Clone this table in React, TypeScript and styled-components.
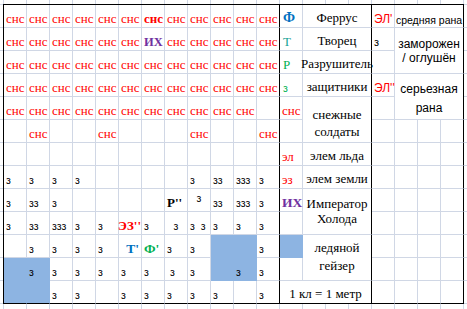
import type { ReactNode } from 'react';
import styled, { createGlobalStyle } from 'styled-components';

const GRID = '#d0d7e5';
const EDGE = '#000000';
const FILL = '#8db4e2';
const RED = '#ff0000';
const BLUE = '#0070c0';
const GREEN = '#00b050';
const TEAL = '#16a398';
const PURPLE = '#7030a0';

const ROWS = 13;
const COLS = 20;
const SECTION_ENDS = [11, 15, 19];

type Align = 'flex-start' | 'center' | 'flex-end';

type Spec = {
  r: number;
  c: number;
  rs?: number;
  cs?: number;
  node?: ReactNode;
  fill?: boolean;
  h?: Align;
  v?: Align;
  px?: number;
  pb?: number;
};

const GlobalStyle = createGlobalStyle`
  html, body {
    margin: 0;
    padding: 0;
    background: #ffffff;
  }
  body {
    overflow: hidden;
  }
`;

const Sheet = styled.div`
  width: 467px;
  height: 309px;
  box-sizing: border-box;
  padding: 4px 0 0 3px;
  overflow: hidden;
  background-color: #ffffff;
  background-image: linear-gradient(to right, ${GRID} 1px, transparent 1px),
    linear-gradient(to bottom, ${GRID} 1px, transparent 1px);
  background-size: 23px 23px;
  background-position: 3px 4px;
`;

const Table = styled.div`
  display: grid;
  grid-template-columns: repeat(${COLS}, 23px);
  grid-template-rows: repeat(${ROWS}, 23px);
  width: max-content;
  border-left: 1px solid ${EDGE};
  border-top: 1px solid ${EDGE};
  background: #ffffff;
`;

const Cell = styled.div<{
  $r: number;
  $c: number;
  $rs: number;
  $cs: number;
  $right: string;
  $bottom: string;
  $fill: boolean;
  $h: Align;
  $v: Align;
  $px: number;
  $pb: number;
}>`
  grid-row: ${(p) => p.$r + 1} / span ${(p) => p.$rs};
  grid-column: ${(p) => p.$c + 1} / span ${(p) => p.$cs};
  display: flex;
  box-sizing: border-box;
  min-width: 0;
  border-right: 1px solid ${(p) => p.$right};
  border-bottom: 1px solid ${(p) => p.$bottom};
  background: ${(p) => (p.$fill ? FILL : 'transparent')};
  justify-content: ${(p) => p.$h};
  align-items: ${(p) => p.$v};
  padding: 0 ${(p) => p.$px}px ${(p) => p.$pb}px;
  white-space: pre;
`;

const Snow = styled.span<{ $bold?: boolean }>`
  font-family: 'Liberation Serif', 'Times New Roman', serif;
  font-size: 13px;
  line-height: 1;
  color: ${RED};
  font-weight: ${(p) => (p.$bold ? 700 : 400)};
`;

const Ice = styled.span<{ $color?: string }>`
  font-family: 'Liberation Sans', Arial, sans-serif;
  font-size: 10.5px;
  line-height: 1;
  margin-bottom: 1px;
  color: ${(p) => p.$color ?? '#000000'};
`;

const Mark = styled.span<{ $color: string; $size?: number; $bold?: boolean }>`
  font-family: 'Liberation Serif', 'Times New Roman', serif;
  font-size: ${(p) => p.$size ?? 13}px;
  font-weight: ${(p) => (p.$bold === false ? 400 : 700)};
  line-height: 1;
  color: ${(p) => p.$color};
`;

const Name = styled.span<{ $lh?: number }>`
  font-family: 'Liberation Serif', 'Times New Roman', serif;
  font-size: 13px;
  line-height: ${(p) => (p.$lh ? `${p.$lh}px` : '1')};
  color: #000000;
  text-align: center;
  margin-bottom: 1px;
`;

const Note = styled.span<{ $color?: string; $size?: number; $lh?: number }>`
  font-family: 'Liberation Sans', Arial, sans-serif;
  font-size: ${(p) => p.$size ?? 12}px;
  line-height: ${(p) => (p.$lh ? `${p.$lh}px` : '1')};
  color: ${(p) => p.$color ?? '#000000'};
  text-align: center;
`;

const specs: Spec[] = [];

const snowRows: number[][] = [
  [0, 1, 2, 3, 4, 5, 6, 7, 8, 9, 10, 11],
  [0, 1, 2, 3, 4, 5, 7, 8, 9, 10, 11],
  [0, 1, 2, 3, 4, 5, 6, 7, 8, 9, 10, 11],
  [0, 1, 2, 3, 4, 5, 6, 7, 8, 9, 10, 11],
  [0, 1, 2, 3, 4, 5, 6, 7, 8, 9, 10, 12],
  [1, 4, 8, 11],
];

snowRows.forEach((cols, r) =>
  cols.forEach((c) => specs.push({ r, c, node: <Snow $bold={r === 0 && c === 6}>снс</Snow> })),
);

const iceCells: [number, number, string][] = [
  [7, 0, 'з'], [7, 1, 'з'], [7, 2, 'з'], [7, 3, 'з'], [7, 8, 'з'], [7, 9, 'зз'], [7, 10, 'ззз'], [7, 11, 'з'],
  [8, 0, 'з'], [8, 1, 'зз'], [8, 2, 'з'], [8, 9, 'зз'], [8, 10, 'ззз'], [8, 11, 'з'],
  [9, 0, 'з'], [9, 1, 'зз'], [9, 2, 'ззз'], [9, 3, 'з'], [9, 4, 'з'], [9, 6, 'з'], [9, 8, 'з  з'],
  [9, 9, 'з'], [9, 10, 'з'], [9, 11, 'з'],
  [10, 1, 'з'], [10, 2, 'з'], [10, 3, 'з'], [10, 4, 'з'], [10, 7, 'з'], [10, 8, 'з'], [10, 11, 'з'],
  [11, 2, 'з'], [11, 3, 'з'], [11, 4, 'з'], [11, 5, 'з'], [11, 6, 'з'], [11, 7, ' з'], [11, 8, 'з'], [11, 11, 'з'],
  [12, 2, 'з'], [12, 3, 'з'], [12, 5, 'з'], [12, 6, 'з'], [12, 7, 'з'], [12, 8, 'з'], [12, 9, 'з'], [12, 11, 'з'],
];

iceCells.forEach(([r, c, t]) => specs.push({ r, c, node: <Ice>{t}</Ice> }));

specs.push(
  { r: 8, c: 8, node: <Ice>з</Ice>, h: 'center', pb: 7 },
  { r: 9, c: 7, node: <Ice>з</Ice>, h: 'center' },
  { r: 10, c: 9, fill: true },
  { r: 10, c: 10, fill: true },
  { r: 11, c: 9, fill: true },
  { r: 11, c: 10, fill: true, node: <Ice>з</Ice> },
  { r: 11, c: 0, fill: true },
  { r: 11, c: 1, fill: true, node: <Ice>з</Ice> },
  { r: 12, c: 0, fill: true },
  { r: 12, c: 1, fill: true },
  { r: 10, c: 12, fill: true },

  { r: 1, c: 6, node: <Mark $color={PURPLE} $size={12.5}>ИХ</Mark> },
  { r: 8, c: 7, node: <Mark $color="#000000">Р''</Mark> },
  { r: 9, c: 5, node: <Mark $color={RED}>ЭЗ''</Mark>, h: 'flex-end', px: 0 },
  { r: 10, c: 5, node: <Mark $color={BLUE} $size={13.5}>Т'</Mark>, h: 'flex-end' },
  { r: 10, c: 6, node: <Mark $color={GREEN} $size={13.5}>Ф'</Mark> },

  { r: 0, c: 12, node: <Mark $color={BLUE} $size={14}>Ф</Mark>, px: 3 },
  { r: 1, c: 12, node: <Mark $color={TEAL} $size={13} $bold={false}>Т</Mark>, px: 3 },
  { r: 2, c: 12, node: <Mark $color={GREEN} $size={13} $bold={false}>Р</Mark>, px: 3 },
  { r: 3, c: 12, node: <Ice $color={GREEN}>з</Ice>, px: 3 },
  { r: 6, c: 12, node: <Snow>эл</Snow> },
  { r: 7, c: 12, node: <Snow>эз</Snow> },
  { r: 8, c: 12, node: <Mark $color={PURPLE} $size={13.5}>ИХ</Mark> },

  { r: 0, c: 13, cs: 3, node: <Name>Феррус</Name>, h: 'center' },
  { r: 1, c: 13, cs: 3, node: <Name>Творец</Name>, h: 'center' },
  { r: 2, c: 13, cs: 3, node: <Name>Разрушитель</Name>, h: 'center', px: 0 },
  { r: 3, c: 13, cs: 3, node: <Name>защитники</Name>, h: 'center' },
  {
    r: 4, c: 13, cs: 3, rs: 2, h: 'center', pb: 1,
    node: <Name $lh={17}>снежные{'\n'}солдаты</Name>,
  },
  { r: 6, c: 13, cs: 3, node: <Name>элем льда</Name>, h: 'center' },
  { r: 7, c: 13, cs: 3, node: <Name>элем земли</Name>, h: 'center' },
  {
    r: 8, c: 13, cs: 3, rs: 2, h: 'center', v: 'center', pb: 0,
    node: <Name $lh={15}>Император{'\n'}Холода</Name>,
  },
  {
    r: 10, c: 13, cs: 3, rs: 2, h: 'center', v: 'center', pb: 0,
    node: <Name $lh={18}>ледяной{'\n'}гейзер</Name>,
  },
  { r: 12, c: 12, cs: 4, node: <Name>1 кл = 1 метр</Name>, h: 'center' },

  { r: 0, c: 16, node: <Note $color={RED}>ЭЛ'</Note> },
  { r: 1, c: 16, node: <Note $size={11}>з</Note> },
  { r: 3, c: 16, node: <Note $color={RED}>ЭЛ''</Note> },
  { r: 0, c: 17, cs: 3, node: <Note $size={10.5}>средняя рана</Note>, h: 'center', px: 0 },
  {
    r: 1, c: 17, cs: 3, rs: 2, h: 'center', v: 'center', pb: 0,
    node: <Note $lh={14}>заморожен{'\n'}/ оглушён</Note>,
  },
  {
    r: 3, c: 17, cs: 3, rs: 2, h: 'center', pb: 1,
    node: <Note $lh={19}>серьезная{'\n'}рана</Note>,
  },
);

const buildCells = (): Spec[] => {
  const taken = new Set<string>();
  specs.forEach(({ r, c, rs = 1, cs = 1 }) => {
    for (let i = r; i < r + rs; i += 1) {
      for (let j = c; j < c + cs; j += 1) taken.add(`${i}-${j}`);
    }
  });
  const blanks: Spec[] = [];
  for (let r = 0; r < ROWS; r += 1) {
    for (let c = 0; c < COLS; c += 1) {
      if (!taken.has(`${r}-${c}`)) blanks.push({ r, c });
    }
  }
  return [...specs, ...blanks].sort((a, b) => a.r - b.r || a.c - b.c);
};

const cells = buildCells();

const App = () => (
  <>
    <GlobalStyle />
    <Sheet>
      <Table>
        {cells.map(({ r, c, rs = 1, cs = 1, node, fill = false, h = 'flex-start', v = 'flex-end', px = 2, pb = 2 }) => {
          const lastCol = c + cs - 1;
          const lastRow = r + rs - 1;
          const soft = fill ? FILL : GRID;
          return (
            <Cell
              key={`${r}-${c}`}
              $r={r}
              $c={c}
              $rs={rs}
              $cs={cs}
              $right={SECTION_ENDS.includes(lastCol) ? EDGE : soft}
              $bottom={lastRow === ROWS - 1 ? EDGE : soft}
              $fill={fill}
              $h={h}
              $v={v}
              $px={px}
              $pb={pb}
            >
              {node}
            </Cell>
          );
        })}
      </Table>
    </Sheet>
  </>
);

export default App;
